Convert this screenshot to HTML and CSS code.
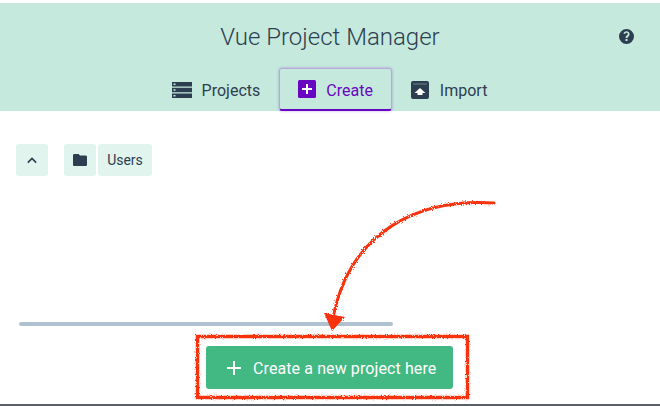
FILE: index.html
```html
<!DOCTYPE html>
<html lang="en">
<head>
    <meta charset="UTF-8">
    <title>Vue Project Manager</title>
    <link rel="stylesheet" href="styles.css">
</head>
<body>
    <div class="app">
        <header class="top">
            <h1 class="title">Vue Project Manager</h1>
            <svg class="help" viewBox="0 0 24 24" width="15" height="15">
                <path fill="#2c3e50" d="M12 0a12 12 0 1 0 0 24 12 12 0 0 0 0-24zm1.6 19h-3.2v-3h3.2v3zm2.6-8.3l-1.2 1.2c-1 1-1.5 1.6-1.5 2.6h-3.1v-.6c0-1.3.5-2.3 1.500-3.300l1.600-1.600c.4-.4.6-.9.6-1.400 0-1-.9-1.800-2-1.800s-2 .8-2 1.800H7.200C7.200 5.300 9.300 3.700 12 3.700s4.800 1.700 4.800 4.300c0 1-.2 2-.6 2.700z"/>
            </svg>
            <nav class="tabs">
                <a class="tab">
                    <svg class="tab-icon" viewBox="0 0 20 16" width="20" height="16">
                        <path fill="#2c3e50" d="M0 0h20v4.500H0zM0 5.800h20v4.500H0zM0 11.500h20V16H0z"/>
                        <path fill="#c6e9dd" d="M1.500 1.500h2v1.500h-2zM1.500 7.300h2v1.500h-2zM1.500 13h2v1.500h-2z"/>
                    </svg>
                    <span class="tab-label">Projects</span>
                </a>
                <a class="tab tab-active">
                    <svg class="tab-icon" viewBox="0 0 18 18" width="18" height="18">
                        <rect width="18" height="18" rx="1.500" fill="#6806c1"/>
                        <path fill="#fff" d="M8 4h2v4h4v2h-4v4H8v-4H4V8h4z"/>
                    </svg>
                    <span class="tab-label">Create</span>
                </a>
                <a class="tab">
                    <svg class="tab-icon import-icon" viewBox="0 0 18 18" width="18" height="18">
                        <path fill="#2c3e50" d="M2 0h14a2 2 0 0 1 2 2v14a2 2 0 0 1-2 2H2a2 2 0 0 1-2-2V2a2 2 0 0 1 2-2z"/>
                        <path fill="#6f8490" d="M2 2.500h14v1H2z"/>
                        <path fill="#fff" d="M9 7l5.500 5H11.500v2h-5v-2H3.500z"/>
                    </svg>
                    <span class="tab-label">Import</span>
                </a>
            </nav>
        </header>

        <main class="explorer">
            <div class="toolbar">
                <button class="tool-btn up-btn" type="button">
                    <svg viewBox="0 0 12 8" width="10" height="7">
                        <path fill="none" stroke="#2c3e50" stroke-width="2" d="M1 6.500l5-5 5 5"/>
                    </svg>
                </button>
                <div class="path">
                    <button class="tool-btn" type="button">
                        <svg viewBox="0 0 14 12" width="14" height="12">
                            <path fill="#2c3e50" d="M1.400 0h4.200l1.400 1.500h5.600c.8 0 1.400.6 1.400 1.300v7.900c0 .7-.6 1.300-1.400 1.300H1.400C.6 12 0 11.400 0 10.700V1.300C0 .6.600 0 1.400 0z"/>
                        </svg>
                    </button>
                    <button class="tool-btn folder-name" type="button">Users</button>
                </div>
            </div>
            <div class="scrollbar"></div>
        </main>

        <footer class="actions">
            <button class="create-btn" type="button">
                <svg viewBox="0 0 14 14" width="14" height="14">
                    <path fill="#fff" d="M6 0h2v6h6v2H8v6H6V8H0V6h6z"/>
                </svg>
                <span class="create-label">Create a new project here</span>
            </button>
        </footer>

        <!-- hand drawn marks on top of the screenshot -->
        <svg class="marks" viewBox="0 0 660 406" width="660" height="406">
            <defs>
                <filter id="rough" x="-5%" y="-5%" width="110%" height="110%">
                    <feTurbulence type="fractalNoise" baseFrequency="0.9" numOctaves="2" seed="3"/>
                    <feDisplacementMap in="SourceGraphic" scale="3"/>
                </filter>
            </defs>
            <g filter="url(#rough)">
                <path fill="none" stroke="#f7300f" stroke-width="3" stroke-linecap="round" d="M494 203C420 198 350 230 333 318"/>
                <path fill="#f7300f" d="M324 313L345 317L332 331Z"/>
                <rect x="197.500" y="336.500" width="270" height="61" fill="none" stroke="#f7300f" stroke-width="3.500"/>
            </g>
        </svg>
    </div>
</body>
</html>
```

FILE: styles.css
```css
html, body {
    margin: 0;
    padding: 0;
}
body {
    font-family: Roboto, "Liberation Sans", sans-serif;
    background: #fff;
    color: #2c3e50;
}
.app {
    position: relative;
    width: 660px;
    height: 406px;
    overflow: hidden;
    box-sizing: border-box;
    padding-top: 3px;
    border-bottom: 2px solid #5a6068;
    display: flex;
    flex-direction: column;
}
.top {
    position: relative;
    height: 108px;
    box-sizing: border-box;
    padding-top: 17px;
    background: #c6e9dd;
    display: flex;
    flex-direction: column;
    align-items: center;
}
.title {
    margin: 0;
    height: 48px;
    font-size: 24px;
    line-height: 34px;
    font-weight: 300;
}
.help {
    position: absolute;
    top: 26px;
    right: 26px;
}
.tabs {
    display: flex;
    margin-left: -1px;
}
.tab {
    height: 43px;
    box-sizing: border-box;
    padding: 0 19px;
    display: flex;
    align-items: center;
    gap: 10px;
    font-size: 16px;
}
.tab-label {
    padding-top: 2px;
}
.tab-active {
    padding: 0 18px;
    color: #6806c1;
    border: 1px solid #b5a9dc;
    border-bottom: 2px solid #6806c1;
    border-radius: 3px;
    box-shadow: 0 0 3px rgba(104, 6, 193, 0.35);
}
.import-icon {
    margin-right: 1px;
}
.explorer {
    flex: 1;
    padding: 33px 16px 0;
    display: flex;
    flex-direction: column;
}
.toolbar {
    display: flex;
    gap: 16px;
}
.path {
    display: flex;
    gap: 2px;
}
.tool-btn {
    width: 32px;
    height: 32px;
    padding: 0;
    border: none;
    border-radius: 3px;
    background: #e2f4ee;
    color: #2c3e50;
    font-family: inherit;
    font-size: 14px;
    display: flex;
    align-items: center;
    justify-content: center;
}
.folder-name {
    width: 54px;
}
.scrollbar {
    width: 374px;
    height: 4px;
    margin: 146px 0 0 3px;
    border-radius: 2px;
    background: #aec3cf;
}
.actions {
    height: 58px;
    box-sizing: border-box;
    display: flex;
    justify-content: center;
}
.create-btn {
    width: 247px;
    height: 43px;
    margin-right: 1px;
    padding: 0 0 0 21px;
    border: none;
    border-radius: 3px;
    background: #42b883;
    color: #fff;
    font-family: inherit;
    font-size: 16px;
    letter-spacing: 0.1px;
    display: flex;
    align-items: center;
    gap: 12px;
}
.create-label {
    padding-top: 2px;
}
.marks {
    position: absolute;
    top: 0;
    left: 0;
    pointer-events: none;
}
```
